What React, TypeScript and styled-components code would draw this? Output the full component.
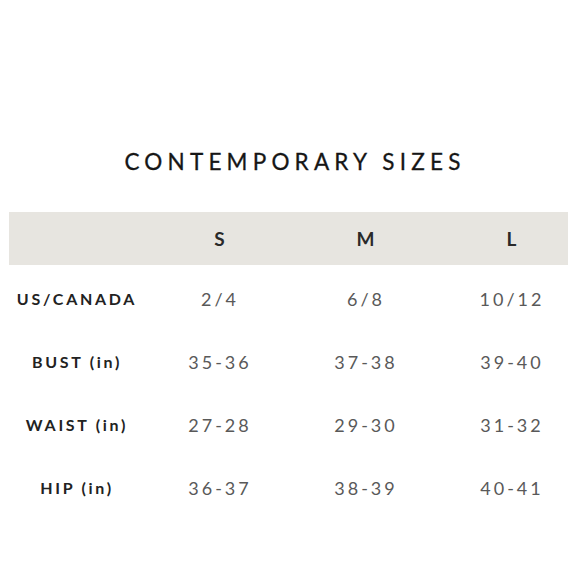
import React from "react";
import styled, { createGlobalStyle } from "styled-components";

const GlobalStyle = createGlobalStyle`
	html, body {
		margin: 0;
		padding: 0;
		background: #ffffff;
	}
	body {
		font-family: Lato, "Open Sans", sans-serif;
	}
`;

const Page = styled.div`
	width: 580px;
	height: 580px;
	box-sizing: border-box;
	padding-top: 147px;
	display: flex;
	flex-direction: column;
	align-items: center;
`;

const Title = styled.h1`
	margin: 0 0 0 10px;
	height: 30px;
	line-height: 30px;
	font-size: 22.5px;
	font-weight: 400;
	letter-spacing: 5.2px;
	color: #161616;
	-webkit-text-stroke: 0.3px #161616;
`;

const Table = styled.div`
	margin-top: 35px;
	margin-left: -3px;
	width: 559px;
	display: grid;
	grid-template-columns: 138px 146px 146px 129px;
`;

const HeaderBand = styled.div`
	grid-column: 1 / -1;
	display: grid;
	grid-template-columns: subgrid;
	height: 53px;
	align-items: center;
	background: #e7e5e0;
`;

const Row = styled.div<{ $first?: boolean }>`
	grid-column: 1 / -1;
	display: grid;
	grid-template-columns: subgrid;
	height: 63px;
	align-items: center;
	margin-top: ${(p) => (p.$first ? "2px" : "0")};
`;

const Cell = styled.div<{ $last?: boolean }>`
	text-align: center;
	padding-left: ${(p) => (p.$last ? "17px" : "0")};
`;

const SizeHead = styled(Cell)`
	font-size: 19px;
	font-weight: 700;
	color: #2a2a2a;
	letter-spacing: 1px;
`;

const Label = styled(Cell)`
	font-size: 16px;
	font-weight: 700;
	color: #222;
	letter-spacing: 2.7px;
	padding-right: 2px;
`;

const Value = styled(Cell)`
	font-size: 18px;
	font-weight: 400;
	color: #595959;
	letter-spacing: 3px;
`;

const rows = [
	{ label: "US/CANADA", values: ["2/4", "6/8", "10/12"] },
	{ label: "BUST (in)", values: ["35-36", "37-38", "39-40"] },
	{ label: "WAIST (in)", values: ["27-28", "29-30", "31-32"] },
	{ label: "HIP (in)", values: ["36-37", "38-39", "40-41"] },
];

const sizes = ["S", "M", "L"];

const App: React.FC = () => {
	return (
		<React.Fragment>
			<GlobalStyle />
			<Page>
				<Title>CONTEMPORARY SIZES</Title>
				<Table>
					<HeaderBand>
						<Cell />
						{sizes.map((s, i) => (
							<SizeHead key={s} $last={i === sizes.length - 1}>
								{s}
							</SizeHead>
						))}
					</HeaderBand>
					{rows.map((row, r) => (
						<Row key={row.label} $first={r === 0}>
							<Label>{row.label}</Label>
							{row.values.map((v, i) => (
								<Value key={i} $last={i === row.values.length - 1}>
									{v}
								</Value>
							))}
						</Row>
					))}
				</Table>
			</Page>
		</React.Fragment>
	);
};

export default App;
